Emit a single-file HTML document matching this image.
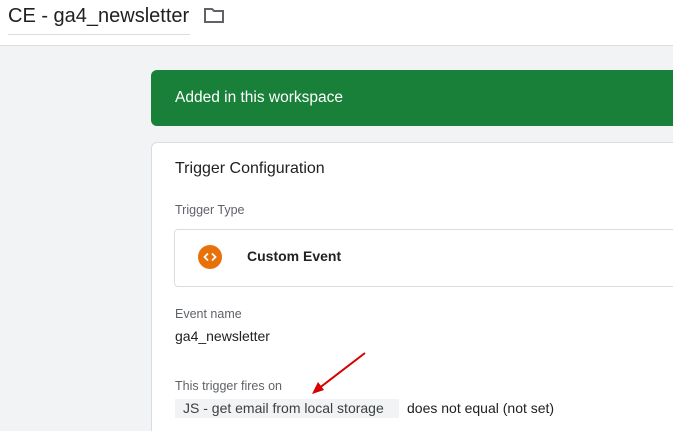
<!DOCTYPE html>
<html style="width:673px;height:431px;overflow:hidden"><head><style>
body{margin:0;width:673px;height:431px;overflow:hidden;background:#f1f3f4;font-family:"Liberation Sans",Arial,sans-serif;position:relative}
.hdr{position:absolute;left:0;top:0;width:673px;height:45px;background:#fff;border-bottom:1px solid #dadce0}
.title{position:absolute;left:8px;top:4px;font-size:20px;color:#202124;padding-bottom:4px;border-bottom:1px solid #dadce0;width:182px;height:26px;line-height:24px}
.green{position:absolute;left:151px;top:70px;width:540px;height:56px;background:#188038;border-radius:6px;color:#fff;font-size:15.5px;line-height:56px;padding-left:24px;box-sizing:border-box}
.card{position:absolute;left:151px;top:142px;width:540px;height:300px;background:#fff;border:1px solid #dadce0;border-radius:6px}
.abs{position:absolute}
.lbl{font-size:12.5px;color:#5f6368}
.ce{position:absolute;left:174px;top:229px;width:520px;height:56px;border:1px solid #dadce0;border-radius:4px;background:#fff}
.chip{position:absolute;left:175px;top:399px;width:224px;height:19px;background:#f1f3f4}
</style></head><body>
<div class="hdr"></div>
<div class="title">CE - ga4_newsletter</div>
<svg class="abs" style="left:203px;top:6px" width="22" height="18" viewBox="0 0 22 18"><path d="M2 3h7l2 2h9v11H2z" fill="none" stroke="#5f6368" stroke-width="2"/></svg>
<div class="green">Added in this workspace</div>
<div class="card"></div>
<div class="abs" style="left:175px;top:160px;font-size:16px;color:#202124">Trigger Configuration</div>
<div class="abs lbl" style="left:175px;top:203px">Trigger Type</div>
<div class="ce"></div>
<svg class="abs" style="left:198px;top:245px" width="24" height="24" viewBox="0 0 24 24"><circle cx="12" cy="12" r="12" fill="#e8710a"/><path d="M10 8.5L6.5 12 10 15.5M14 8.5l3.5 3.5-3.5 3.5" fill="none" stroke="#fff" stroke-width="1.8"/></svg>
<div class="abs" style="left:247px;top:248px;font-size:14px;font-weight:bold;color:#202124">Custom Event</div>
<div class="abs lbl" style="left:175px;top:307px">Event name</div>
<div class="abs" style="left:175px;top:328px;font-size:14px;color:#202124">ga4_newsletter</div>
<div class="abs lbl" style="left:175px;top:379px">This trigger fires on</div>
<div class="chip"></div>
<div class="abs" style="left:183px;top:400px;font-size:14px;color:#3c4043">JS - get email from local storage</div>
<div class="abs" style="left:407px;top:400px;font-size:14px;color:#202124">does not equal (not set)</div>
<svg class="abs" style="left:310px;top:350px" width="60" height="48" viewBox="0 0 60 48"><path d="M55 3L8 39" stroke="#d50000" stroke-width="2"/><path d="M2 44L8 32 14 40z" fill="#d50000"/></svg>
</body></html>
